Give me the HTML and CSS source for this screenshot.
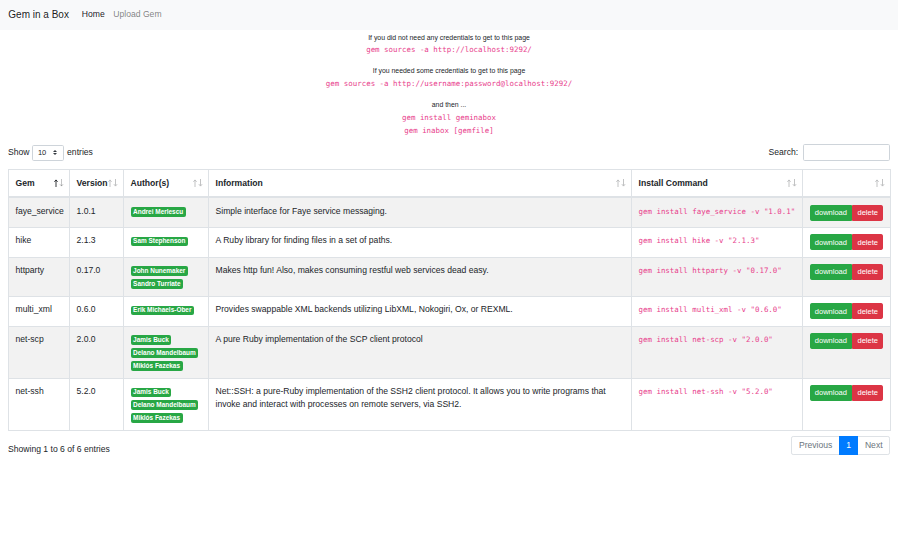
FILE: index.html
```html
<!DOCTYPE html>
<html lang="en">
<head>
<meta charset="utf-8">
<title>Gem in a Box</title>
<link rel="stylesheet" href="styles.css">
</head>
<body>
<nav class="navbar">
  <a class="brand" href="#">Gem in a Box</a>
  <a class="nav-link active" href="#">Home</a>
  <a class="nav-link" href="#">Upload Gem</a>
</nav>
<main class="main">
  <div class="intro">
    <p><small>If you did not need any credentials to get to this page</small><br><code>gem sources -a http://localhost:9292/</code></p>
    <p><small>If you needed some credentials to get to this page</small><br><code>gem sources -a http://username:password@localhost:9292/</code></p>
    <p><small>and then ...</small><br><code>gem install geminabox</code><br><code>gem inabox [gemfile]</code></p>
  </div>

  <div class="dt-top">
    <div class="dt-length">Show
      <span class="select">10
        <svg class="select-arrow" width="4" height="5" viewBox="0 0 4 5"><path fill="#343a40" d="M2 0L0 2h4zm0 5L0 3h4z"/></svg>
      </span>
      entries</div>
    <label class="dt-search">Search:<input type="search" class="search-input"></label>
  </div>

  <table class="table">
    <colgroup>
      <col class="c-gem"><col class="c-ver"><col class="c-auth"><col class="c-info"><col class="c-cmd"><col class="c-act">
    </colgroup>
    <thead>
      <tr>
        <th>Gem<svg class="sort" width="10" height="8" viewBox="0 0 10 8"><g fill="none" stroke="#212529" stroke-width="0.9"><path d="M2 8V1M0.4 2.8L2 0.9L3.6 2.8"/><path class="off" d="M7.5 0V7M5.9 5.2L7.5 7.1L9.1 5.2"/></g></svg></th>
        <th>Version<svg class="sort" width="10" height="8" viewBox="0 0 10 8"><g class="off" fill="none" stroke="#212529" stroke-width="0.9"><path d="M2 8V1M0.4 2.8L2 0.9L3.6 2.8"/><path d="M7.5 0V7M5.9 5.2L7.5 7.1L9.1 5.2"/></g></svg></th>
        <th>Author(s)<svg class="sort" width="10" height="8" viewBox="0 0 10 8"><g class="off" fill="none" stroke="#212529" stroke-width="0.9"><path d="M2 8V1M0.4 2.8L2 0.9L3.6 2.8"/><path d="M7.5 0V7M5.9 5.2L7.5 7.1L9.1 5.2"/></g></svg></th>
        <th>Information<svg class="sort" width="10" height="8" viewBox="0 0 10 8"><g class="off" fill="none" stroke="#212529" stroke-width="0.9"><path d="M2 8V1M0.4 2.8L2 0.9L3.6 2.8"/><path d="M7.5 0V7M5.9 5.2L7.5 7.1L9.1 5.2"/></g></svg></th>
        <th>Install Command<svg class="sort" width="10" height="8" viewBox="0 0 10 8"><g class="off" fill="none" stroke="#212529" stroke-width="0.9"><path d="M2 8V1M0.4 2.8L2 0.9L3.6 2.8"/><path d="M7.5 0V7M5.9 5.2L7.5 7.1L9.1 5.2"/></g></svg></th>
        <th><svg class="sort" width="10" height="8" viewBox="0 0 10 8"><g class="off" fill="none" stroke="#212529" stroke-width="0.9"><path d="M2 8V1M0.4 2.8L2 0.9L3.6 2.8"/><path d="M7.5 0V7M5.9 5.2L7.5 7.1L9.1 5.2"/></g></svg></th>
      </tr>
    </thead>
    <tbody>
      <tr>
        <td>faye_service</td>
        <td>1.0.1</td>
        <td><span class="badge">Andrei Merlescu</span></td>
        <td>Simple interface for Faye service messaging.</td>
        <td><code>gem install faye_service -v "1.0.1"</code></td>
        <td><div class="btn-group"><a class="btn btn-success" href="#">download</a><a class="btn btn-danger" href="#">delete</a></div></td>
      </tr>
      <tr>
        <td>hike</td>
        <td>2.1.3</td>
        <td><span class="badge">Sam Stephenson</span></td>
        <td>A Ruby library for finding files in a set of paths.</td>
        <td><code>gem install hike -v "2.1.3"</code></td>
        <td><div class="btn-group"><a class="btn btn-success" href="#">download</a><a class="btn btn-danger" href="#">delete</a></div></td>
      </tr>
      <tr>
        <td>httparty</td>
        <td>0.17.0</td>
        <td><span class="badge">John Nunemaker</span><br><span class="badge">Sandro Turriate</span></td>
        <td>Makes http fun! Also, makes consuming restful web services dead easy.</td>
        <td><code>gem install httparty -v "0.17.0"</code></td>
        <td><div class="btn-group"><a class="btn btn-success" href="#">download</a><a class="btn btn-danger" href="#">delete</a></div></td>
      </tr>
      <tr>
        <td>multi_xml</td>
        <td>0.6.0</td>
        <td><span class="badge">Erik Michaels-Ober</span></td>
        <td>Provides swappable XML backends utilizing LibXML, Nokogiri, Ox, or REXML.</td>
        <td><code>gem install multi_xml -v "0.6.0"</code></td>
        <td><div class="btn-group"><a class="btn btn-success" href="#">download</a><a class="btn btn-danger" href="#">delete</a></div></td>
      </tr>
      <tr>
        <td>net-scp</td>
        <td>2.0.0</td>
        <td><span class="badge">Jamis Buck</span><br><span class="badge">Delano Mandelbaum</span><br><span class="badge">Miklós Fazekas</span></td>
        <td>A pure Ruby implementation of the SCP client protocol</td>
        <td><code>gem install net-scp -v "2.0.0"</code></td>
        <td><div class="btn-group"><a class="btn btn-success" href="#">download</a><a class="btn btn-danger" href="#">delete</a></div></td>
      </tr>
      <tr>
        <td>net-ssh</td>
        <td>5.2.0</td>
        <td><span class="badge">Jamis Buck</span><br><span class="badge">Delano Mandelbaum</span><br><span class="badge">Miklós Fazekas</span></td>
        <td>Net::SSH: a pure-Ruby implementation of the SSH2 client protocol. It allows you to write programs that invoke and interact with processes on remote servers, via SSH2.</td>
        <td><code>gem install net-ssh -v "5.2.0"</code></td>
        <td><div class="btn-group"><a class="btn btn-success" href="#">download</a><a class="btn btn-danger" href="#">delete</a></div></td>
      </tr>
    </tbody>
  </table>

  <div class="dt-bottom">
    <div class="dt-info">Showing 1 to 6 of 6 entries</div>
    <ul class="pagination">
      <li class="page-item disabled"><a class="page-link first" href="#">Previous</a></li>
      <li class="page-item active"><a class="page-link" href="#">1</a></li>
      <li class="page-item disabled"><a class="page-link last" href="#">Next</a></li>
    </ul>
  </div>
</main>
</body>
</html>
```
FILE: styles.css
```css
* { box-sizing: border-box; }

body {
  margin: 0;
  font-family: "Liberation Sans", Arial, sans-serif;
  font-size: 8.6px;
  line-height: 1.5;
  color: #212529;
  background: #fff;
}

a { text-decoration: none; }

.navbar {
  display: flex;
  align-items: center;
  height: 29.5px;
  padding: 0 8.3px;
  background: #f8f9fa;
}

.brand {
  font-size: 10px;
  color: rgba(0, 0, 0, 0.9);
  margin-right: 8.6px;
}

.nav-link {
  padding: 0 4.3px;
  color: rgba(0, 0, 0, 0.5);
}

.nav-link.active { color: rgba(0, 0, 0, 0.9); }

.main { padding: 1px 8px 0; }

.intro { text-align: center; }

.intro p { margin: 0 0 8.2px; }

.intro small { font-size: 6.9px; }

code {
  font-family: "DejaVu Sans Mono", "Liberation Mono", monospace;
  font-size: 7.45px;
  color: #e83e8c;
  white-space: nowrap;
}

.dt-top {
  display: flex;
  justify-content: space-between;
  align-items: center;
  height: 17px;
  margin-top: -1px;
}

.dt-length { display: flex; align-items: center; }

.select {
  display: inline-flex;
  align-items: center;
  justify-content: space-between;
  width: 32px;
  height: 16.6px;
  margin: 0 2.8px;
  padding: 0 6px 0 4.6px;
  border: 1px solid #ced4da;
  border-radius: 1.7px;
  font-size: 7.5px;
  background: #fff;
}

.select-arrow { display: block; }

.dt-search { display: flex; align-items: center; }

.search-input {
  width: 87.5px;
  height: 17px;
  margin: 0 0 0 4.3px;
  border: 1px solid #ced4da;
  border-radius: 1.7px;
  padding: 0 4px;
  font-size: 7.5px;
  background: #fff;
}

.table {
  width: 882px;
  margin-top: 7.5px;
  border-collapse: collapse;
  table-layout: fixed;
}

.c-gem { width: 61px; }
.c-ver { width: 54px; }
.c-auth { width: 85px; }
.c-info { width: 423px; }
.c-cmd { width: 171px; }
.c-act { width: 88px; }

.table th,
.table td {
  border: 1px solid #dee2e6;
  padding: 6.3px 6.5px;
  text-align: left;
  vertical-align: top;
}

.table th {
  position: relative;
  vertical-align: bottom;
  padding: 6.8px 16px 6.8px 6.5px;
  font-weight: 700;
  border-bottom-width: 2px;
}

.table tbody tr:nth-child(odd) { background: rgba(0, 0, 0, 0.05); }

.sort {
  position: absolute;
  right: 5.5px;
  top: 9.5px;
  display: block;
}

.sort .off { opacity: 0.3; }

.badge {
  display: inline-block;
  padding: 1.6px 2.6px;
  font-size: 6.45px;
  font-weight: 700;
  line-height: 1;
  color: #fff;
  background: #28a745;
  border-radius: 2px;
  white-space: nowrap;
}

.btn-group { display: inline-flex; }

.btn {
  display: inline-block;
  padding: 1.4px 4.3px;
  font-size: 7.5px;
  line-height: 1.5;
  color: #fff;
  border: 1px solid transparent;
}

.btn-success {
  background: #28a745;
  border-color: #28a745;
  border-radius: 1.7px 0 0 1.7px;
}

.btn-danger {
  background: #dc3545;
  border-color: #dc3545;
  border-radius: 0 1.7px 1.7px 0;
}

.dt-bottom {
  display: flex;
  justify-content: space-between;
  align-items: flex-start;
  margin-top: 4.5px;
}

.dt-info { padding-top: 7.3px; }

.pagination {
  display: flex;
  list-style: none;
  margin: 0;
  padding: 0;
}

.page-link {
  display: block;
  margin-left: -1px;
  padding: 3.6px 6.45px;
  line-height: 1.25;
  border: 1px solid #dee2e6;
  color: #007bff;
  background: #fff;
}

.page-item.disabled .page-link { color: #6c757d; }

.page-item.active .page-link {
  color: #fff;
  background: #007bff;
  border-color: #007bff;
  position: relative;
}

.page-link.first { margin-left: 0; border-radius: 2.15px 0 0 2.15px; }
.page-link.last { border-radius: 0 2.15px 2.15px 0; }
```
